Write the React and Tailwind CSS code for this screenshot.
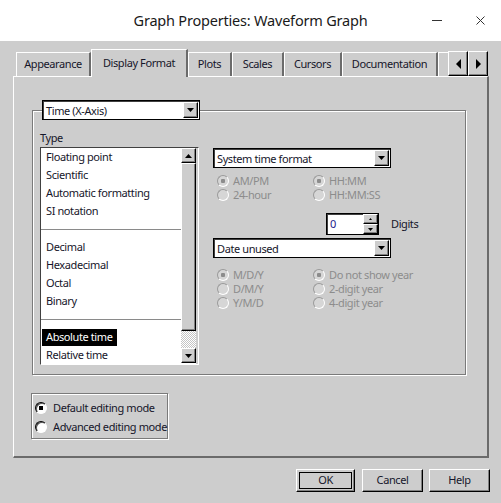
import React from "react";

// raised 3d bevel used by buttons, arrow boxes and the scroll thumb
const RAISED =
  "bg-[#cdcdcd] border border-t-white border-l-white border-r-black border-b-black shadow-[inset_-1px_-1px_0_#808080]";
const ETCHED = "border border-[#7a7a7a] shadow-[inset_1px_1px_0_#fff,1px_1px_0_#fff]";

const listGroups = [
  ["Floating point", "Scientific", "Automatic formatting", "SI notation"],
  ["Decimal", "Hexadecimal", "Octal", "Binary"],
  ["Absolute time", "Relative time"],
];

function DownTri() {
  return (
    <svg width="7" height="4" viewBox="0 0 7 4">
      <path d="M0 0H7L3.5 4Z" fill="#000" />
    </svg>
  );
}

function UpTri() {
  return (
    <svg width="7" height="4" viewBox="0 0 7 4">
      <path d="M3.5 0L7 4H0Z" fill="#000" />
    </svg>
  );
}

function DropButton() {
  return (
    <div className={`w-[15px] h-[16px] shrink-0 flex items-center justify-center ${RAISED}`}>
      <DownTri />
    </div>
  );
}

function Dropdown({ label, className = "" }) {
  return (
    <div
      className={`h-[20px] bg-white border border-black shadow-[inset_1px_1px_0_#404040] flex items-center justify-between pl-[3px] pr-px ${className}`}
    >
      <span className="leading-none whitespace-nowrap">{label}</span>
      <DropButton />
    </div>
  );
}

function DimRadio({ checked, label }) {
  return (
    <div className="h-[14px] flex items-center gap-[4px] text-[#8c8c8c] whitespace-nowrap">
      <span className="w-[12px] h-[12px] shrink-0 rounded-full bg-[#d6d6d6] border border-t-[#9a9a9a] border-l-[#9a9a9a] border-r-white border-b-white flex items-center justify-center">
        {checked && <span className="w-[4px] h-[4px] rounded-[1px] bg-[#8c8c8c]" />}
      </span>
      <span>{label}</span>
    </div>
  );
}

function Radio({ checked, label }) {
  return (
    <div className="h-[14px] flex items-center gap-[6px] whitespace-nowrap">
      <span className="w-[12px] h-[12px] shrink-0 rounded-full bg-white border border-t-black border-l-black border-r-white border-b-white shadow-[inset_1px_1px_0_#555] flex items-center justify-center">
        {checked && <span className="w-[4px] h-[4px] bg-black" />}
      </span>
      <span>{label}</span>
    </div>
  );
}

function TitleBar() {
  return (
    <div className="h-[41px] shrink-0 bg-white relative flex items-center justify-center">
      <span className="text-[14.5px] tracking-[-0.2px] text-[#1a1a1a]">
        Graph Properties: Waveform Graph
      </span>
      <div className="absolute right-0 top-0 h-full flex items-center">
        <div className="w-[46px] flex justify-center">
          <span className="w-[10px] h-px bg-[#333]" />
        </div>
        <div className="w-[41px] flex justify-center">
          <svg width="9" height="9" viewBox="0 0 9 9">
            <path d="M0.5 0.5L8.5 8.5M8.5 0.5L0.5 8.5" stroke="#333" strokeWidth="1" />
          </svg>
        </div>
      </div>
    </div>
  );
}

function Tab({ label, w, active }) {
  if (active) {
    return (
      <div
        className={`${w} h-[28px] -mb-px relative z-10 bg-[#cdcdcd] border-l border-t border-white border-r-2 border-r-[#6b6b6b] flex items-center justify-center pb-px`}
      >
        {label}
      </div>
    );
  }
  return (
    <div
      className={`${w} h-[24px] border-l border-t border-white border-r-2 border-r-[#6b6b6b] flex items-center justify-center`}
    >
      {label}
    </div>
  );
}

function TabStrip() {
  return (
    <div className="h-[35px] shrink-0 pl-[16px] flex items-end">
      <Tab label="Appearance" w="w-[75px]" />
      <Tab label="Display Format" w="w-[97px]" active />
      <Tab label="Plots" w="w-[44px]" />
      <Tab label="Scales" w="w-[52px]" />
      <Tab label="Cursors" w="w-[58px]" />
      <Tab label="Documentation" w="w-[96px]" />
      <div className="w-[10px] h-[24px] border-l border-t border-white" />
      <div className={`w-[20px] h-[25px] flex items-center justify-center ${RAISED}`}>
        <svg width="5" height="10" viewBox="0 0 5 10">
          <path d="M5 0V10L0 5Z" fill="#000" />
        </svg>
      </div>
      <div className={`w-[20px] h-[25px] flex items-center justify-center ${RAISED}`}>
        <svg width="5" height="10" viewBox="0 0 5 10">
          <path d="M0 0V10L5 5Z" fill="#000" />
        </svg>
      </div>
    </div>
  );
}

function TypeList() {
  return (
    <div className="h-[218px] border border-t-[#404040] border-l-[#404040] border-r-white border-b-white flex">
      <div className="flex-1 bg-white flex flex-col">
        {listGroups.map((group, gi) => (
          <React.Fragment key={gi}>
            {gi > 0 && (
              <div className="h-[18px] flex items-center">
                <div className="w-full h-px bg-[#8a8a8a]" />
              </div>
            )}
            {group.map((item) => (
              <div key={item} className="h-[18px] flex items-center pl-px whitespace-nowrap">
                {item === "Absolute time" ? (
                  <span className="h-[17px] flex items-center px-[4px] bg-black text-white">
                    {item}
                  </span>
                ) : (
                  <span className="px-[4px]">{item}</span>
                )}
              </div>
            ))}
          </React.Fragment>
        ))}
      </div>
      <div className="w-[15px] flex flex-col bg-white">
        <div className={`h-[15px] flex items-center justify-center ${RAISED}`}>
          <UpTri />
        </div>
        <div className={`h-[168px] ${RAISED}`} />
        <div className="h-[17px] bg-[repeating-conic-gradient(#ffffff_0%_25%,#c4c4c4_0%_50%)] bg-[length:2px_2px]" />
        <div className={`h-[15px] flex items-center justify-center ${RAISED}`}>
          <DownTri />
        </div>
      </div>
      <div className="w-[2px] bg-[#cdcdcd]" />
    </div>
  );
}

function TimeColumn() {
  return (
    <div className="w-[178px] mt-[19px] flex flex-col">
      <Dropdown label="System time format" />
      <div className="mt-[6px] grid grid-cols-[96px_max-content] pl-[4px]">
        <DimRadio checked label="AM/PM" />
        <DimRadio checked label="HH:MM" />
        <DimRadio label="24-hour" />
        <DimRadio label="HH:MM:SS" />
      </div>
      <div className="mt-[11px] ml-[113px] flex items-center whitespace-nowrap">
        <div className="w-[53px] h-[22px] shrink-0 bg-white border border-black shadow-[inset_1px_1px_0_#404040] flex">
          <span className="flex-1 pl-[3px] flex items-center text-[#1a1a8a]">0</span>
          <div className="w-[15px] flex flex-col">
            <div className={`flex-1 flex items-center justify-center ${RAISED}`}>
              <svg width="3" height="2" viewBox="0 0 3 2">
                <path d="M1.5 0L3 2H0Z" fill="#000" />
              </svg>
            </div>
            <div className={`flex-1 flex items-center justify-center ${RAISED}`}>
              <svg width="5" height="3" viewBox="0 0 5 3">
                <path d="M0 0H5L2.5 3Z" fill="#000" />
              </svg>
            </div>
          </div>
        </div>
        <span className="ml-[12px] shrink-0">Digits</span>
      </div>
      <Dropdown label="Date unused" className="mt-[3px]" />
      <div className="mt-[10px] grid grid-cols-[96px_max-content] pl-[4px]">
        <DimRadio checked label="M/D/Y" />
        <DimRadio checked label="Do not show year" />
        <DimRadio label="D/M/Y" />
        <DimRadio label="2-digit year" />
        <DimRadio label="Y/M/D" />
        <DimRadio label="4-digit year" />
      </div>
    </div>
  );
}

function Panel() {
  return (
    <div className="ml-[13px] w-[476px] h-[382px] shrink-0 border-l border-t border-white border-r-2 border-b-2 border-r-[#6b6b6b] border-b-[#6b6b6b] flex flex-col">
      {/* Time axis group */}
      <div className={`ml-[18px] mt-[33px] w-[434px] h-[265px] shrink-0 relative ${ETCHED}`}>
        <Dropdown label="Time (X-Axis)" className="absolute left-[9px] top-[-11px] w-[158px]" />
        <div className="flex pl-[7px] pt-[18px]">
          <div className="w-[159px] shrink-0 flex flex-col">
            <div className="h-[18px] flex items-center">Type</div>
            <TypeList />
          </div>
          <div className="ml-[14px]">
            <TimeColumn />
          </div>
        </div>
      </div>

      {/* Editing mode */}
      <div className={`ml-[17px] mt-[18px] w-[137px] h-[46px] shrink-0 flex flex-col gap-[5px] pt-[7px] pl-[3px] ${ETCHED}`}>
        <Radio checked label="Default editing mode" />
        <Radio label="Advanced editing mode" />
      </div>
    </div>
  );
}

function Buttons() {
  return (
    <div className="mt-[11px] flex justify-end pr-[11px]">
      <button className={`w-[59px] h-[23px] p-[2px] flex ${RAISED}`}>
        <span className="flex-1 border border-black flex items-center justify-center">OK</span>
      </button>
      <button className={`ml-[7px] w-[61px] h-[23px] flex items-center justify-center ${RAISED}`}>
        Cancel
      </button>
      <button className={`ml-[6px] w-[61px] h-[23px] flex items-center justify-center ${RAISED}`}>
        Help
      </button>
    </div>
  );
}

export default function App() {
  return (
    <div className="w-[501px] h-[503px] overflow-hidden bg-[#cdcdcd] flex flex-col font-['Noto_Sans',sans-serif] text-[11px] tracking-[-0.4px] text-[#16162a]">
      <TitleBar />
      <TabStrip />
      <Panel />
      <Buttons />
    </div>
  );
}
